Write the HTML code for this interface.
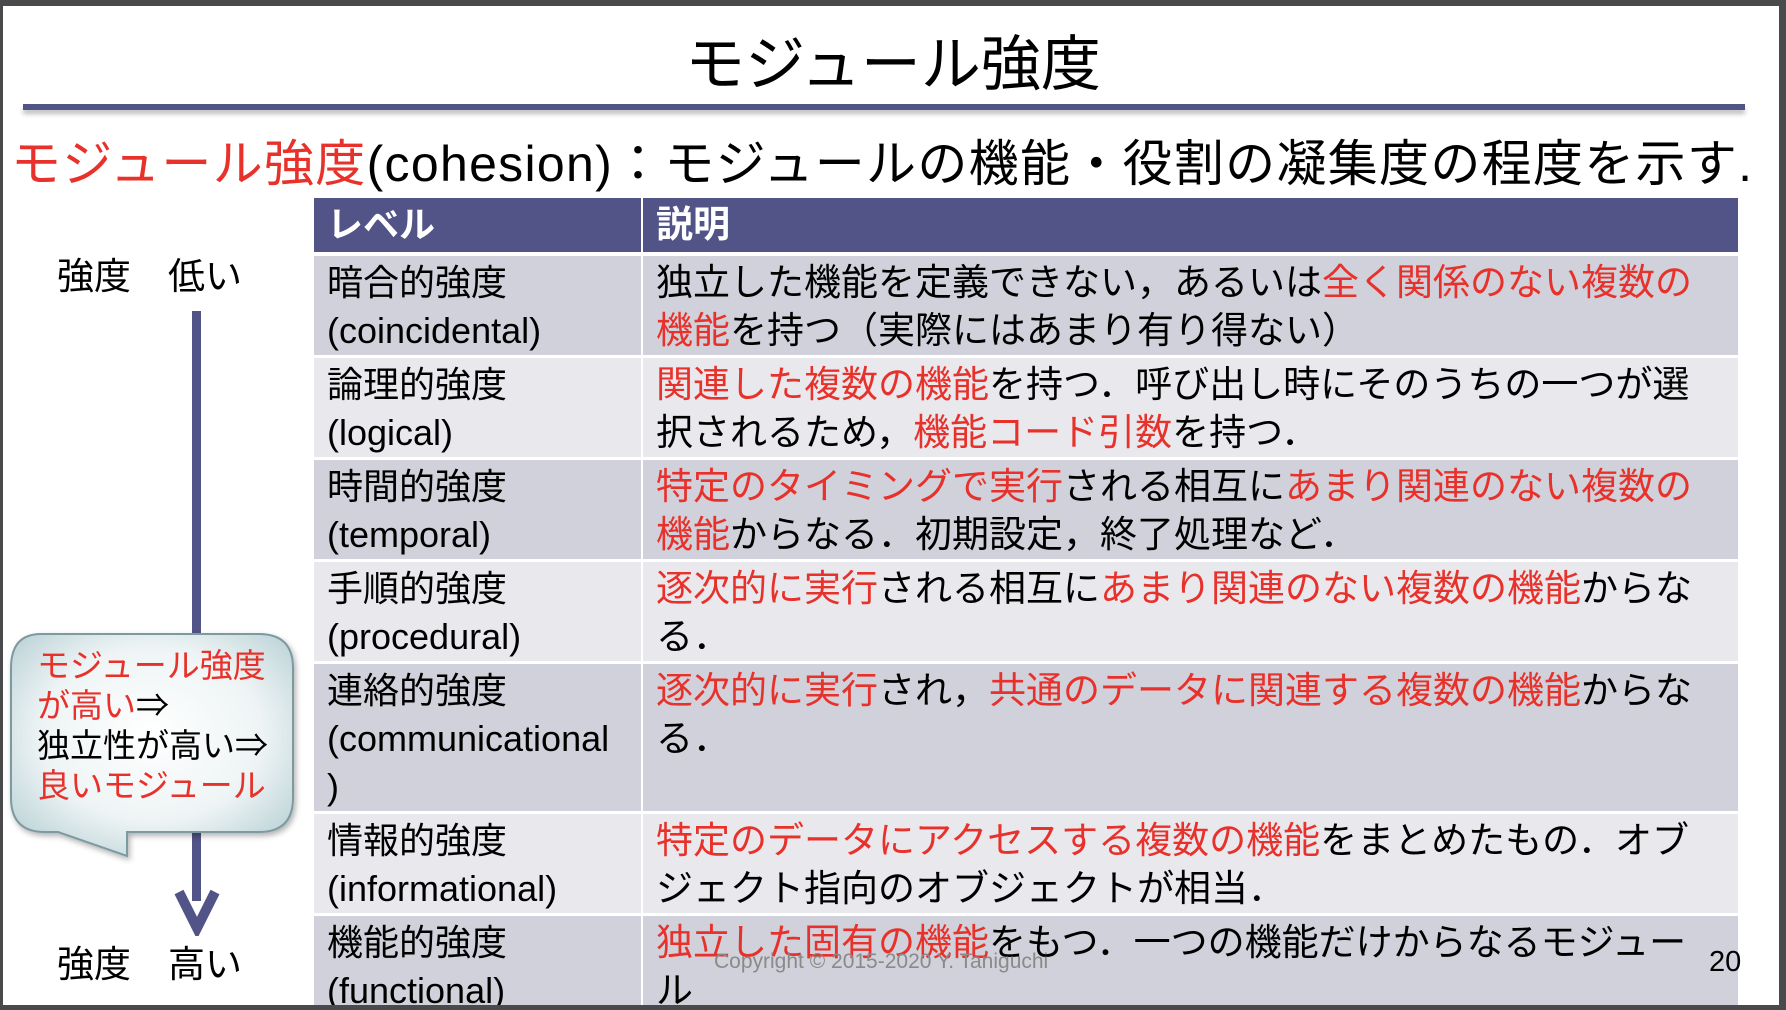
<!DOCTYPE html>
<html><head><meta charset="utf-8"><style>
*{margin:0;padding:0;box-sizing:border-box}
body{width:1786px;height:1010px;overflow:hidden;background:#4a4a4c;position:relative;font-family:"Liberation Sans","Noto Sans CJK JP",sans-serif;}
#slide{position:absolute;left:3px;top:6px;width:1776px;height:999px;background:#fff;overflow:hidden}
.abs{position:absolute;white-space:nowrap}
#title{left:0;width:1780px;text-align:center;top:10px;font-size:60px;color:#000}
#line{left:20px;top:98px;width:1722px;height:6px;background:#525386;box-shadow:0 4px 5px rgba(0,0,0,0.25)}
#sub{left:8px;top:118px;font-size:50px;letter-spacing:1.3px;color:#000}
.r{color:#e8312a}
table{position:absolute;left:311px;top:192px;border-collapse:separate;border-spacing:0;width:1424px}
td,th{font-size:37px;line-height:48px;vertical-align:top;white-space:nowrap;font-weight:normal;text-align:left}
th{background:#525386;color:#fff;font-weight:bold;height:54px;line-height:54px;padding-left:13px;border-bottom:4px solid #fff}
td{padding:3px 0 0 13px;border-bottom:3px solid #fff}
td.c1,th.c1{width:329px;border-right:2px solid #fff;font-size:36px}
tr.d td{background:#d0d1da}
tr.l td{background:#e8e8ed}
#arrow{left:189px;top:305px;width:9px;height:590px;background:#525386}
.lab{font-size:37px;color:#000}
#cp{left:711px;top:944px;font-size:21px;color:#8a8a8a}
#pg{left:1706px;top:940px;font-size:29px;color:#000}
#bub{left:34px;top:640px;font-size:33px;line-height:40px;color:#000}
</style></head><body>
<div id="slide">
<div class="abs" id="title">モジュール強度</div>
<div class="abs" id="line"></div>
<div class="abs" id="sub"><span class="r">モジュール強度</span>(cohesion)：モジュールの機能・役割の凝集度の程度を示す.</div>
<table>
<tr><th class="c1">レベル</th><th>説明</th></tr>
<tr class="d"><td class="c1">暗合的強度<br>(coincidental)</td><td>独立した機能を定義できない，あるいは<span class="r">全く関係のない複数の</span><br><span class="r">機能</span>を持つ（実際にはあまり有り得ない）</td></tr>
<tr class="l"><td class="c1">論理的強度<br>(logical)</td><td><span class="r">関連した複数の機能</span>を持つ．呼び出し時にそのうちの一つが選<br>択されるため，<span class="r">機能コード引数</span>を持つ．</td></tr>
<tr class="d"><td class="c1">時間的強度<br>(temporal)</td><td><span class="r">特定のタイミングで実行</span>される相互に<span class="r">あまり関連のない複数の</span><br><span class="r">機能</span>からなる．初期設定，終了処理など．</td></tr>
<tr class="l"><td class="c1">手順的強度<br>(procedural)</td><td><span class="r">逐次的に実行</span>される相互に<span class="r">あまり関連のない複数の機能</span>からな<br>る．</td></tr>
<tr class="d"><td class="c1">連絡的強度<br>(communicational<br>)</td><td><span class="r">逐次的に実行</span>され，<span class="r">共通のデータに関連する複数の機能</span>からな<br>る．</td></tr>
<tr class="l"><td class="c1">情報的強度<br>(informational)</td><td><span class="r">特定のデータにアクセスする複数の機能</span>をまとめたもの．オブ<br>ジェクト指向のオブジェクトが相当．</td></tr>
<tr class="d"><td class="c1">機能的強度<br>(functional)</td><td><span class="r">独立した固有の機能</span>をもつ．一つの機能だけからなるモジュー<br>ル</td></tr>
</table>
<div class="abs lab" style="left:54px;top:240px">強度　低い</div>
<div class="abs lab" style="left:54px;top:928px">強度　高い</div>
<div class="abs" id="arrow"></div>
<svg class="abs" style="left:170px;top:880px" width="48" height="50"><polyline points="6,6 24,42 42,6" fill="none" stroke="#525386" stroke-width="10" stroke-linejoin="miter"/></svg>
<svg class="abs" style="left:0;top:612px" width="310" height="250">
<defs><radialGradient id="g" cx="50%" cy="45%" r="65%"><stop offset="0" stop-color="#ffffff"/><stop offset="0.6" stop-color="#eef4f5"/><stop offset="1" stop-color="#bcd3d7"/></radialGradient>
<filter id="s"><feDropShadow dx="2" dy="3" stdDeviation="3" flood-opacity="0.3"/></filter></defs>
<path d="M38,16 H256 Q290,16 290,50 V180 Q290,214 256,214 H124 V238 L55,214 H42 Q8,214 8,180 V50 Q8,16 38,16 Z" fill="url(#g)" stroke="#7d9aa0" stroke-width="2" filter="url(#s)"/>
</svg>
<div class="abs" id="bub"><span class="r">モジュール強度<br>が高い</span>⇒<br>独立性が高い⇒<br><span class="r">良いモジュール</span></div>
<div class="abs" id="cp">Copyright © 2015-2020 Y. Taniguchi</div>
<div class="abs" id="pg">20</div>
</div>
</body></html>
